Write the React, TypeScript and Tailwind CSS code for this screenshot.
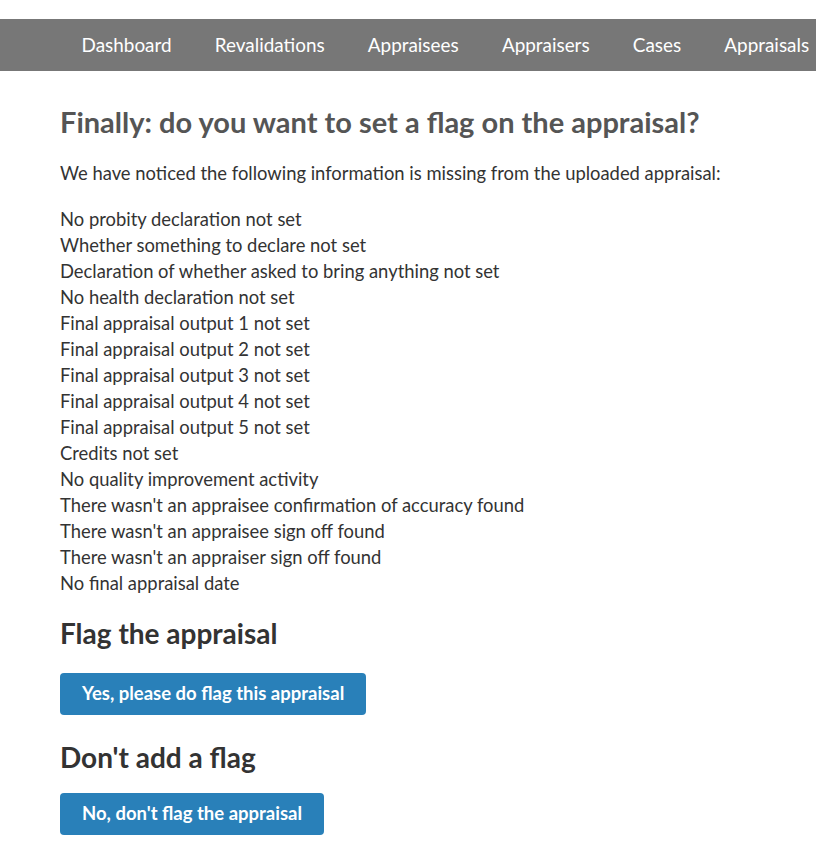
const navItems = ['Dashboard', 'Revalidations', 'Appraisees', 'Appraisers', 'Cases', 'Appraisals'];

const missing = [
  'No probity declaration not set',
  'Whether something to declare not set',
  'Declaration of whether asked to bring anything not set',
  'No health declaration not set',
  'Final appraisal output 1 not set',
  'Final appraisal output 2 not set',
  'Final appraisal output 3 not set',
  'Final appraisal output 4 not set',
  'Final appraisal output 5 not set',
  'Credits not set',
  'No quality improvement activity',
  "There wasn't an appraisee confirmation of accuracy found",
  "There wasn't an appraisee sign off found",
  "There wasn't an appraiser sign off found",
  'No final appraisal date',
];

export default function App() {
  return (
    <div className="min-h-screen bg-white text-[#333] font-['Lato',sans-serif] pt-[19px] overflow-hidden">
      {/* Top nav */}
      <nav className="h-[52px] bg-[#777] flex items-center pl-[60px] whitespace-nowrap">
        {navItems.map((item) => (
          <a key={item} className="px-[21.6px] text-[18.9px] text-white">
            {item}
          </a>
        ))}
      </nav>

      <main className="px-[60px]">
        <h1 className="mt-[33px] text-[29px] leading-[36px] font-bold text-[#555]">
          Finally: do you want to set a flag on the appraisal?
        </h1>
        <p className="mt-[20px] text-[18.4px] leading-[26px]">
          We have noticed the following information is missing from the uploaded appraisal:
        </p>

        <ul className="mt-[20px] text-[18.4px] leading-[26px]">
          {missing.map((m) => (
            <li key={m}>{m}</li>
          ))}
        </ul>

        <h2 className="mt-[19px] text-[28px] leading-[36px] font-bold">Flag the appraisal</h2>
        <button className="mt-[22px] h-[42px] px-[22px] rounded-[4px] bg-[#2980b9] text-white text-[18.5px] font-bold">
          Yes, please do flag this appraisal
        </button>

        <h2 className="mt-[24px] text-[28px] leading-[36px] font-bold">Don't add a flag</h2>
        <button className="mt-[18px] h-[42px] px-[22px] rounded-[4px] bg-[#2980b9] text-white text-[18.5px] font-bold">
          No, don't flag the appraisal
        </button>
      </main>
    </div>
  );
}
